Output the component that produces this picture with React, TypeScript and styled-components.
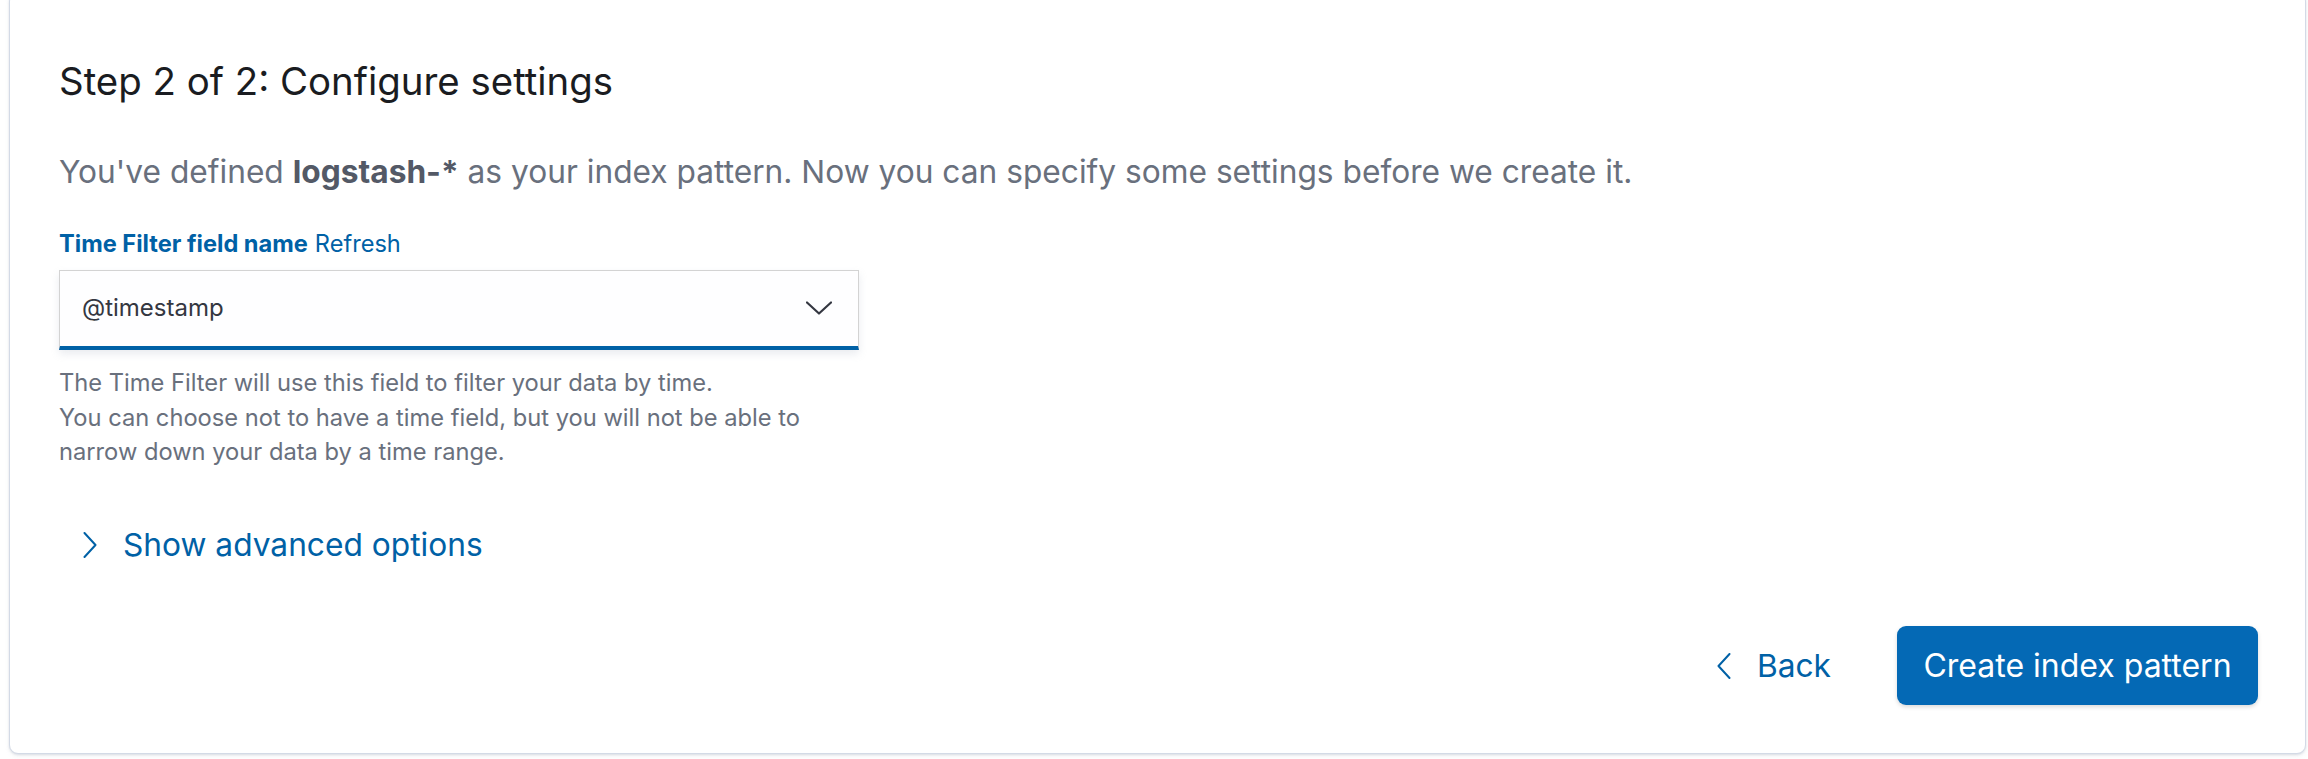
import styled, { createGlobalStyle } from "styled-components";

const GlobalStyle = createGlobalStyle`
  html, body {
    margin: 0;
    padding: 0;
    background: #ffffff;
  }

  body {
    font-family: Inter, "Noto Sans", sans-serif;
    color: #343741;
  }
`;

const Page = styled.div`
  padding: 0 2px 0 9px;
  overflow: hidden;
  height: 759px;
`;

const Panel = styled.section`
  margin-top: -8px;
  height: 762px;
  box-sizing: border-box;
  border: 1.5px solid #d3dae6;
  border-radius: 9px;
  background: #ffffff;
  box-shadow: 0 1px 2px rgba(152, 162, 179, 0.25), 0 2px 4px rgba(152, 162, 179, 0.15);
  padding: 60px 47px 0 49px;
  display: flex;
  flex-direction: column;
  align-items: flex-start;
`;

const Title = styled.h1`
  margin: 0;
  font-size: 38.4px;
  font-weight: 400;
  line-height: 56px;
  color: #1a1c21;
`;

const Lead = styled.p`
  margin: 39px 0 0;
  font-size: 31.7px;
  line-height: 48px;
  color: #69707d;

  b {
    font-weight: 700;
    color: #535966;
  }
`;

const Label = styled.div`
  margin-top: 31px;
  display: flex;
  gap: 7px;
  font-size: 23.6px;
  line-height: 34px;
  color: #0061a6;

  b {
    font-weight: 700;
  }
`;

const SelectBox = styled.div`
  margin-top: 9px;
  width: 800px;
  height: 80px;
  box-sizing: border-box;
  display: flex;
  align-items: center;
  justify-content: space-between;
  padding: 0 26px 2px 22px;
  border: 1.5px solid #d3d3d3;
  border-bottom: 4px solid #0061a6;
  background: #fefeff;
  box-shadow: 0 4px 8px rgba(152, 162, 179, 0.2);
  font-size: 24px;
  color: #343741;
`;

const Help = styled.div`
  margin-top: 16px;
  font-size: 23.7px;
  line-height: 34.7px;
  color: #69707d;
`;

const LinkButton = styled.button`
  display: inline-flex;
  align-items: center;
  gap: 26px;
  padding: 0;
  border: 0;
  background: none;
  font-family: inherit;
  font-size: 31.7px;
  line-height: 48px;
  color: #0061a6;
  cursor: pointer;
`;

const Advanced = styled.div`
  margin-top: 51px;
  padding-left: 24px;
`;

const Footer = styled.div`
  align-self: stretch;
  margin-top: 57px;
  display: flex;
  justify-content: flex-end;
  align-items: center;
  gap: 66px;
`;

const PrimaryButton = styled.button`
  width: 361px;
  height: 79px;
  border: 0;
  border-radius: 9px;
  background: #0469b5;
  color: #ffffff;
  font-family: inherit;
  font-size: 32px;
  font-weight: 400;
  box-shadow: 0 2px 4px rgba(0, 0, 0, 0.15);
  cursor: pointer;
`;

function ArrowSide({ dir }: { dir: "left" | "right" }) {
  const d = dir === "right" ? "M1.5 1 L12.5 13 L1.5 25" : "M12.5 1 L1.5 13 L12.5 25";
  return (
    <svg width={14} height={26} viewBox="0 0 14 26" fill="none">
      <path d={d} stroke="currentColor" strokeWidth={2} strokeLinecap="round" strokeLinejoin="round" />
    </svg>
  );
}

function ArrowDown() {
  return (
    <svg width={26} height={14} viewBox="0 0 26 14" fill="none">
      <path d="M1 1.5 L13 12.5 L25 1.5" stroke="#343741" strokeWidth={2.2} strokeLinecap="round" strokeLinejoin="round" />
    </svg>
  );
}

export default function App() {
  return (
    <>
      <GlobalStyle />
      <Page>
        <Panel>
          <Title>Step 2 of 2: Configure settings</Title>
          <Lead>
            You've defined <b>logstash-*</b> as your index pattern. Now you can specify some settings before we create it.
          </Lead>

          <Label>
            <b>Time Filter field name</b>
            <span>Refresh</span>
          </Label>
          <SelectBox>
            <span>@timestamp</span>
            <ArrowDown />
          </SelectBox>
          <Help>
            The Time Filter will use this field to filter your data by time.
            <br />
            You can choose not to have a time field, but you will not be able to
            <br />
            narrow down your data by a time range.
          </Help>

          <Advanced>
            <LinkButton>
              <ArrowSide dir="right" />
              Show advanced options
            </LinkButton>
          </Advanced>

          <Footer>
            <LinkButton>
              <ArrowSide dir="left" />
              Back
            </LinkButton>
            <PrimaryButton>Create index pattern</PrimaryButton>
          </Footer>
        </Panel>
      </Page>
    </>
  );
}
